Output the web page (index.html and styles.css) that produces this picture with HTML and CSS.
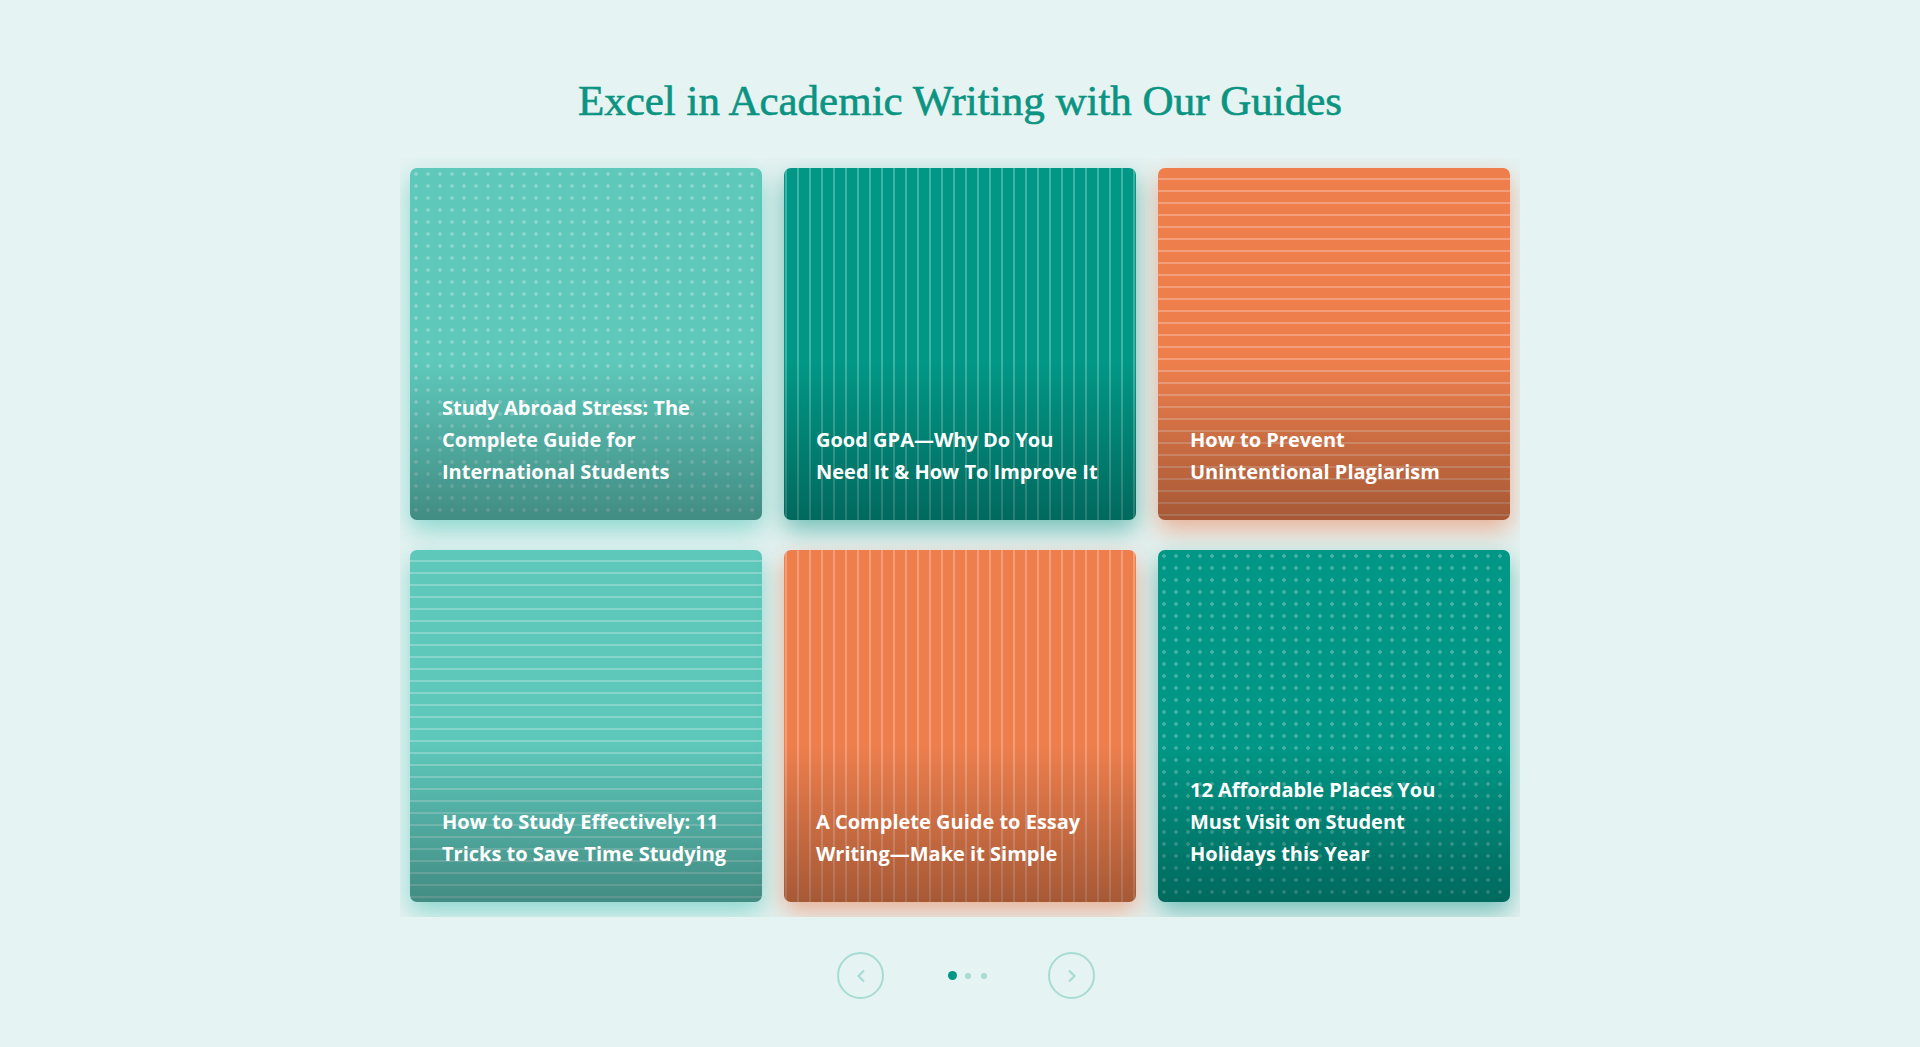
FILE: index.html
```html
<!DOCTYPE html>
<html lang="en">
<head>
<meta charset="utf-8">
<title>Excel in Academic Writing with Our Guides</title>
<link rel="stylesheet" href="styles.css">
</head>
<body>
<main class="page">
  <h1 class="title">Excel in Academic Writing with Our Guides</h1>
  <section class="slider">
    <div class="grid">
      <a class="card light dots" href="#"><span class="card-title">Study Abroad Stress: The Complete Guide for International Students</span></a>
      <a class="card teal vlines" href="#"><span class="card-title">Good GPA—Why Do You Need It &amp; How To Improve It</span></a>
      <a class="card orange hlines" href="#"><span class="card-title">How to Prevent Unintentional Plagiarism</span></a>
      <a class="card light hlines" href="#"><span class="card-title">How to Study Effectively: 11 Tricks to Save Time Studying</span></a>
      <a class="card orange vlines" href="#"><span class="card-title">A Complete Guide to Essay Writing—Make it Simple</span></a>
      <a class="card teal dots" href="#"><span class="card-title">12 Affordable Places You Must Visit on Student Holidays this Year</span></a>
    </div>
  </section>
  <nav class="pager">
    <button class="arrow" aria-label="Previous">
      <svg width="14" height="14" viewBox="0 0 14 14"><polyline points="10,1.5 4.5,7 10,12.5" fill="none" stroke="#a6dcd4" stroke-width="2.2"/></svg>
    </button>
    <div class="dots-nav">
      <span class="dot active"></span>
      <span class="dot"></span>
      <span class="dot"></span>
    </div>
    <button class="arrow" aria-label="Next">
      <svg width="14" height="14" viewBox="0 0 14 14"><polyline points="4,1.5 9.5,7 4,12.5" fill="none" stroke="#a6dcd4" stroke-width="2.2"/></svg>
    </button>
  </nav>
</main>
</body>
</html>
```
FILE: styles.css
```css
* { box-sizing: border-box; }
html, body { margin: 0; padding: 0; }
body {
  background: #e5f3f2;
  min-height: 1047px;
  font-family: "Open Sans", "Noto Sans", sans-serif;
}
.page {
  padding-top: 76px;
  display: flex;
  flex-direction: column;
  align-items: center;
}
.title {
  margin: 0 0 32px;
  font-family: "Liberation Serif", "DejaVu Serif", serif;
  font-weight: 400;
  font-size: 43px;
  line-height: 50px;
  color: #0b9482;
  -webkit-text-stroke: 0.6px #0b9482;
  text-align: center;
}
.slider {
  width: 1120px;
  padding: 10px 10px 15px;
  overflow: hidden;
}
.grid {
  display: grid;
  grid-template-columns: repeat(3, 352px);
  grid-auto-rows: 352px;
  column-gap: 22px;
  row-gap: 30px;
}
.card {
  position: relative;
  display: flex;
  align-items: flex-end;
  border-radius: 7px;
  padding: 0 30px 32px 32px;
  text-decoration: none;
  color: #fff;
}
.card-title {
  position: relative;
  font-weight: 700;
  font-size: 20px;
  line-height: 32px;
  color: #fff;
}
.light { --base: #5ec8bb; box-shadow: 0 10px 24px rgba(80, 196, 182, 0.6); }
.teal { --base: #009786; box-shadow: 0 10px 24px rgba(0, 140, 124, 0.5); }
.orange { --base: #ee7f4d; box-shadow: 0 10px 24px rgba(236, 120, 72, 0.55); }

.dots {
  background:
    linear-gradient(to bottom, rgba(0,0,0,0) 55%, rgba(0,0,0,0.3) 100%),
    radial-gradient(circle at 6px 6px, rgba(255,255,255,0.26) 1.5px, rgba(255,255,255,0) 2.2px) 0 0 / 12px 12px,
    var(--base);
}
.hlines {
  background:
    linear-gradient(to bottom, rgba(0,0,0,0) 55%, rgba(0,0,0,0.3) 100%),
    repeating-linear-gradient(to bottom, rgba(255,255,255,0) 0 10px, rgba(255,255,255,0.25) 10px 12px),
    var(--base);
}
.vlines {
  background:
    linear-gradient(to bottom, rgba(0,0,0,0) 55%, rgba(0,0,0,0.3) 100%),
    repeating-linear-gradient(to right, rgba(255,255,255,0) 0 1px, rgba(255,255,255,0.25) 1px 3px, rgba(255,255,255,0) 3px 12px),
    var(--base);
}
.pager {
  margin-top: 35px;
  padding-left: 12px;
  display: flex;
  align-items: center;
  justify-content: center;
}
.arrow {
  width: 47px;
  height: 47px;
  border: 2px solid #a6dcd4;
  border-radius: 50%;
  background: transparent;
  display: flex;
  align-items: center;
  justify-content: center;
  padding: 0;
  cursor: pointer;
}
.dots-nav {
  display: flex;
  align-items: center;
  width: 48px;
  margin: 0 56px 0 60px;
}
.dot {
  width: 16px;
  display: flex;
  justify-content: center;
}
.dot::before {
  content: "";
  width: 6px;
  height: 6px;
  border-radius: 50%;
  background: #a6dcd4;
}
.dot.active::before {
  width: 9px;
  height: 9px;
  background: #009786;
}
```
